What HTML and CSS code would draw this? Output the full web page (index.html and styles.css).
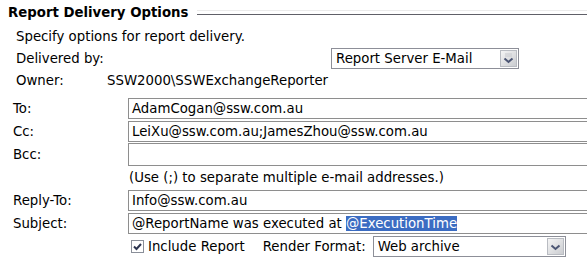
FILE: index.html
```html
<!DOCTYPE html>
<html lang="en">
<head>
  <meta charset="UTF-8">
  <title>Report Delivery Options</title>
  <link rel="stylesheet" href="styles.css">
</head>
<body>
  <div class="legend">
    <span class="legend-title">Report Delivery Options</span>
    <span class="legend-line"></span>
  </div>

  <div class="intro">
    <div class="row">Specify options for report delivery.</div>
    <div class="row">
      <span class="lbl-delivered">Delivered by:</span>
      <div class="select select-delivered">
        <span class="select-text">Report Server E-Mail</span>
        <span class="drop">
          <svg width="17" height="17" viewBox="0 0 17 17">
            <defs>
              <linearGradient id="g1" x1="0" y1="0" x2="1" y2="1">
                <stop offset="0" stop-color="#f6f6f6"/>
                <stop offset="1" stop-color="#c9cbcf"/>
              </linearGradient>
            </defs>
            <rect x="0.5" y="0.5" width="16" height="16" fill="url(#g1)" stroke="#b9bcc2"/>
            <path d="M5 4h7M5 6h7" stroke="#c6c8cd" stroke-width="1"/>
            <path d="M4.5 8.5l4 3.5 4-3.5" fill="none" stroke="#4b5573" stroke-width="2"/>
          </svg>
        </span>
      </div>
    </div>
    <div class="row">
      <span class="lbl-owner">Owner:</span>
      <span>SSW2000\SSWExchangeReporter</span>
    </div>
  </div>

  <div class="mail">
    <span class="lbl">To:</span>
    <div class="field">AdamCogan@ssw.com.au</div>

    <span class="lbl">Cc:</span>
    <div class="field">LeiXu@ssw.com.au;JamesZhou@ssw.com.au</div>

    <span class="lbl">Bcc:</span>
    <div class="field field-tall"></div>

    <span></span>
    <div class="hint">(Use (;) to separate multiple e-mail addresses.)</div>

    <span class="lbl">Reply-To:</span>
    <div class="field">Info@ssw.com.au</div>

    <span class="lbl">Subject:</span>
    <div class="field">@ReportName was executed at <span class="sel">@ExecutionTime</span></div>

    <span></span>
    <div class="opts">
      <span class="check">
        <svg width="13" height="13" viewBox="0 0 13 13">
          <rect x="0.5" y="0.5" width="12" height="12" fill="#fff" stroke="#8a8f99"/>
          <path d="M3 6.5l2.5 2.5 4.5-5" fill="none" stroke="#2d3550" stroke-width="2"/>
        </svg>
      </span>
      <span class="inc">Include Report</span>
      <span class="fmt">Render Format:</span>
      <div class="select select-format">
        <span class="select-text">Web archive</span>
        <span class="drop">
          <svg width="17" height="17" viewBox="0 0 17 17">
            <defs>
              <linearGradient id="g2" x1="0" y1="0" x2="1" y2="1">
                <stop offset="0" stop-color="#f6f6f6"/>
                <stop offset="1" stop-color="#c9cbcf"/>
              </linearGradient>
            </defs>
            <rect x="0.5" y="0.5" width="16" height="16" fill="url(#g2)" stroke="#b9bcc2"/>
            <path d="M4.5 7.5l4 3.5 4-3.5" fill="none" stroke="#4b5573" stroke-width="2"/>
          </svg>
        </span>
      </div>
    </div>
  </div>
</body>
</html>
```

FILE: styles.css
```css
body {
  margin: 0;
  background: #fff;
  color: #000;
  font-family: "DejaVu Sans", Verdana, sans-serif;
  font-size: 13.3px;
  overflow: hidden;
}
.legend {
  display: flex;
  align-items: center;
  height: 18px;
  margin-top: 3px;
  padding-left: 8px;
}
.legend-title {
  font-weight: bold;
  font-size: 13.3px;
  white-space: nowrap;
}
.legend-line {
  flex: 1;
  height: 3px;
  margin-left: 9px;
  margin-top: 1px;
  border-top: 1px solid #ebebeb;
  border-bottom: 1px solid #606068;
}
.intro {
  padding-left: 16px;
  margin-top: 4px;
}
.row {
  display: flex;
  align-items: center;
  height: 22px;
  white-space: nowrap;
}
.lbl-delivered {
  width: 315px;
}
.lbl-owner {
  width: 91px;
}
.select {
  display: flex;
  align-items: center;
  height: 21px;
  box-sizing: border-box;
  border: 1px solid #8d8f98;
  background: #fff;
  padding: 0 1px 0 4px;
}
.select-text {
  flex: 1;
}
.drop {
  display: flex;
}
.select-delivered {
  width: 188px;
}
.mail {
  display: grid;
  grid-template-columns: 128px 1fr;
  grid-auto-rows: 23px;
  align-items: center;
  margin-top: 6px;
}
.lbl {
  padding-left: 13px;
}
.field {
  height: 21px;
  box-sizing: border-box;
  border: 1px solid #8e8e8e;
  border-right: none;
  padding-left: 3px;
  line-height: 19px;
  white-space: nowrap;
}
.field-tall {
  height: 23px;
}
.hint {
  padding-left: 1px;
  white-space: nowrap;
}
.sel {
  background: #3b6cc2;
  color: #fff;
}
.opts {
  display: flex;
  align-items: center;
  white-space: nowrap;
}
.check {
  display: flex;
  margin-left: 3px;
  margin-right: 4px;
}
.fmt {
  margin-left: 18px;
  margin-right: 7px;
}
.select-format {
  width: 193px;
}
```
